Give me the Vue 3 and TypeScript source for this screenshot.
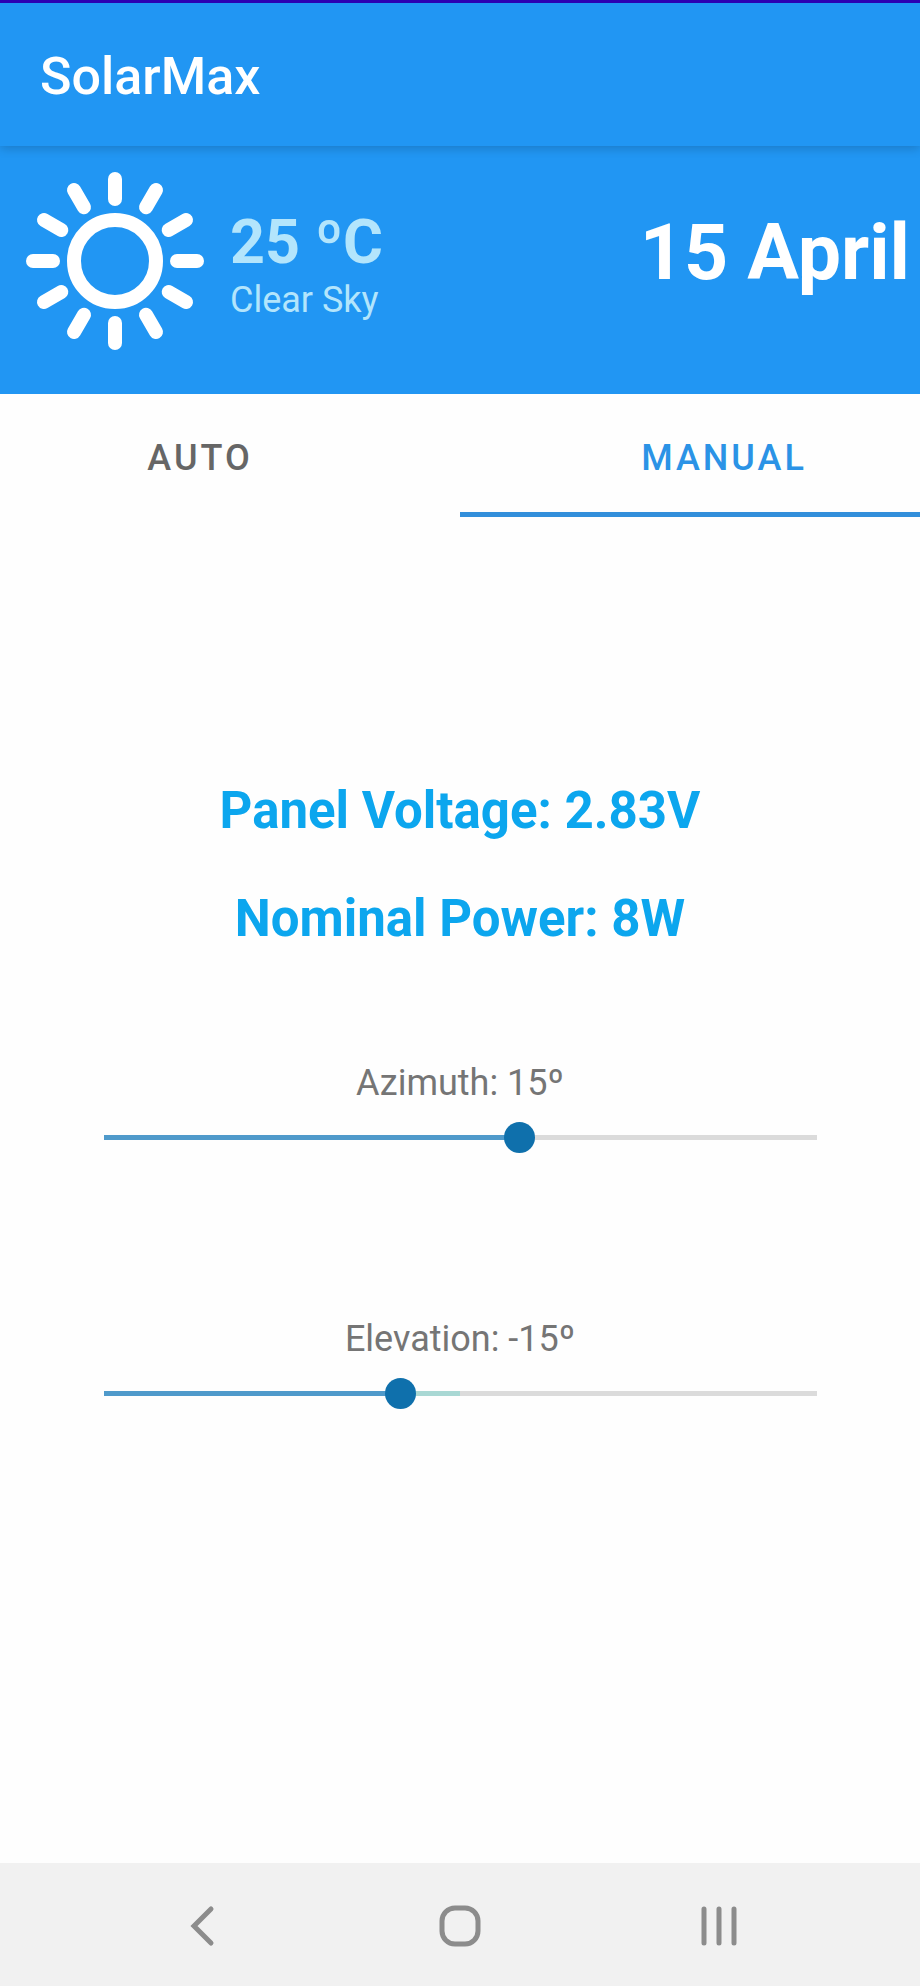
<script setup lang="ts">
import { computed, ref } from 'vue'

type TabId = 'auto' | 'manual'

interface Axis {
  id: string
  label: string
  value: number
  secondary: number
}

const MIN = -90
const MAX = 90

const tabs: { id: TabId; label: string }[] = [
  { id: 'auto', label: 'AUTO' },
  { id: 'manual', label: 'MANUAL' },
]
const activeTab = ref<TabId>('manual')

const axes = ref<Axis[]>([
  { id: 'azimuth', label: 'Azimuth', value: 15, secondary: 0 },
  { id: 'elevation', label: 'Elevation', value: -15, secondary: 0 },
])

const percent = (value: number): string => `${((value - MIN) / (MAX - MIN)) * 100}%`

const trackStyles = computed(() =>
  axes.value.map((axis) => ({
    '--progress': percent(axis.value),
    '--secondary': percent(Math.max(axis.value, axis.secondary)),
  })),
)

const rays = Array.from({ length: 12 }, (_, i) => i * 30)
</script>

<template>
  <div class="screen">
    <header class="app-bar">
      <h1 class="app-title">SolarMax</h1>
    </header>

    <section class="weather" aria-label="Weather">
      <svg class="sun" viewBox="-89 -89 178 178" aria-hidden="true">
        <circle r="41" />
        <line v-for="angle in rays" :key="angle" y1="-82" y2="-62" :transform="`rotate(${angle})`" />
      </svg>
      <div class="conditions">
        <p class="temperature">25 ºC</p>
        <p class="sky">Clear Sky</p>
      </div>
      <p class="date">15 April</p>
    </section>

    <div class="tabs" role="tablist">
      <button
        v-for="tab in tabs"
        :key="tab.id"
        type="button"
        role="tab"
        class="tab"
        :class="[`tab-${tab.id}`, { active: activeTab === tab.id }]"
        :aria-selected="activeTab === tab.id"
        @click="activeTab = tab.id"
      >
        {{ tab.label }}
      </button>
    </div>

    <main class="panel">
      <p class="reading">Panel Voltage: 2.83V</p>
      <p class="reading">Nominal Power: 8W</p>

      <div class="axes">
        <div v-for="(axis, i) in axes" :key="axis.id" class="axis">
          <label :for="axis.id">{{ axis.label }}: {{ axis.value }}º</label>
          <input
            :id="axis.id"
            v-model.number="axis.value"
            type="range"
            :min="MIN"
            :max="MAX"
            :style="trackStyles[i]"
          />
        </div>
      </div>
    </main>

    <nav class="system-nav" aria-label="System navigation">
      <button type="button" aria-label="Back">
        <svg viewBox="0 0 48 48"><path d="M34 7 17 24l17 17" /></svg>
      </button>
      <button type="button" aria-label="Home">
        <svg viewBox="0 0 48 48"><rect x="6" y="6" width="36" height="36" rx="13" /></svg>
      </button>
      <button type="button" aria-label="Recent apps">
        <svg viewBox="0 0 48 48"><path d="M9 7v34M24 7v34M39 7v34" /></svg>
      </button>
    </nav>
  </div>
</template>

<style>
body {
  margin: 0;
  background: #fefefe;
}
</style>

<style scoped>
.screen {
  display: flex;
  flex-direction: column;
  min-height: 100vh;
  font-family: Roboto, 'Liberation Sans', sans-serif;
  color: #757575;
}

h1,
p {
  margin: 0;
}

button {
  margin: 0;
  padding: 0;
  border: 0;
  background: none;
  font: inherit;
  color: inherit;
  cursor: pointer;
}

.app-bar {
  position: relative;
  display: flex;
  align-items: center;
  box-sizing: border-box;
  height: 146px;
  padding: 4px 40px 0;
  border-top: 3px solid #2c00b2;
  background: #2196f3;
  box-shadow: 0 2px 10px rgba(0, 0, 0, 0.2);
}

.app-title {
  font-size: 52px;
  line-height: 60px;
  font-weight: 500;
  color: #fff;
}

.weather {
  display: flex;
  align-items: center;
  gap: 26px;
  padding: 26px 10px 44px 26px;
  background: #2196f3;
}

.sun {
  flex: none;
  width: 178px;
  height: 178px;
  fill: none;
  stroke: #fff;
  stroke-width: 14px;
  stroke-linecap: round;
}

.conditions {
  padding-top: 6px;
  color: #b3e5fc;
}

.temperature {
  font-size: 61px;
  line-height: 72px;
  font-weight: 700;
}

.sky {
  font-size: 36px;
  line-height: 44px;
}

.date {
  margin-left: auto;
  padding-bottom: 16px;
  font-size: 77px;
  line-height: 88px;
  font-weight: 700;
  color: #fff;
}

.tabs {
  display: grid;
  grid-template-columns: 1fr 1fr;
}

.tab {
  padding: 42px 0 32px;
  border-bottom: 5px solid transparent;
  font-size: 36px;
  line-height: 44px;
  font-weight: 500;
  letter-spacing: 3px;
  color: #666;
}

.tab-auto {
  padding-right: 60px;
}

.tab-manual {
  padding-left: 68px;
}

.tab.active {
  border-bottom-color: #328fdb;
  color: #2b93e6;
}

.panel {
  flex: 1;
  padding: 264px 88px 60px;
  text-align: center;
}

.reading {
  margin-bottom: 48px;
  font-size: 51px;
  line-height: 60px;
  font-weight: 700;
  color: #0ca6ee;
}

.axes {
  display: grid;
  gap: 164px;
  padding-top: 64px;
}

.axis {
  display: grid;
  gap: 17px;
}

.axis label {
  font-size: 36px;
  line-height: 44px;
}

.axis input {
  appearance: none;
  width: 100%;
  height: 31px;
  margin: 0;
  background: linear-gradient(
      to right,
      #4f9acb var(--progress),
      #a9d8d4 var(--progress) var(--secondary),
      #dbdbdb var(--secondary)
    )
    center / calc(100% - 31px) 5px no-repeat;
}

.axis input::-webkit-slider-thumb {
  appearance: none;
  width: 31px;
  height: 31px;
  border: 0;
  border-radius: 50%;
  background: #0f70ac;
}

.axis input::-moz-range-thumb {
  width: 31px;
  height: 31px;
  border: 0;
  border-radius: 50%;
  background: #0f70ac;
}

.system-nav {
  display: grid;
  grid-template-columns: repeat(3, 1fr);
  box-sizing: border-box;
  height: 123px;
  padding: 2px 72px 0;
  background: #f1f1f1;
}

.system-nav button {
  display: grid;
  place-items: center;
}

.system-nav svg {
  width: 48px;
  height: 48px;
  fill: none;
  stroke: #8c8c8c;
  stroke-width: 5px;
  stroke-linecap: round;
  stroke-linejoin: miter;
}
</style>
